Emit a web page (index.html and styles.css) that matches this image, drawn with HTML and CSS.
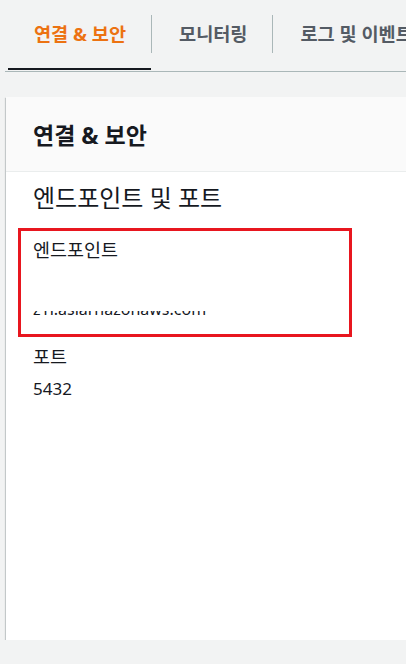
FILE: index.html
```html
<!DOCTYPE html>
<html lang="ko">
<head>
  <meta charset="UTF-8" />
  <meta name="viewport" content="width=device-width, initial-scale=1.0" />
  <title>연결 &amp; 보안</title>
  <link rel="stylesheet" href="styles.css">
</head>
<body>
  <div class="tabs">
    <div class="tab active">연결 &amp; 보안</div>
    <span class="tab-sep"></span>
    <div class="tab">모니터링</div>
    <span class="tab-sep"></span>
    <div class="tab">로그 및 이벤트</div>
  </div>

  <div class="card">
    <div class="card-header">
      <h2>연결 &amp; 보안</h2>
    </div>
    <div class="card-body">
      <h3>엔드포인트 및 포트</h3>
      <div class="field highlight">
        <div class="label">엔드포인트</div>
        <div class="value-mask">
          <div class="value">z1r.asiarnazonaws.com</div>
        </div>
      </div>
      <div class="field">
        <div class="label">포트</div>
        <div class="value port">5432</div>
      </div>
    </div>
  </div>
</body>
</html>
```

FILE: styles.css
```css
html, body {
  overflow: hidden;
}
body {
  margin: 0;
  background: #f2f3f3;
  font-family: "Noto Sans", "Noto Sans CJK KR", sans-serif;
  color: #16191f;
}
.tabs {
  display: flex;
  margin-left: 5px;
  padding-left: 3px;
  border-bottom: 1px solid #aab7b8;
  white-space: nowrap;
}
.tab {
  height: 70px;
  box-sizing: border-box;
  display: flex;
  align-items: center;
  padding: 0 25px 4px 26px;
  border-bottom: 2px solid transparent;
  margin-bottom: 1px;
  font-size: 18.6px;
  font-weight: bold;
  color: #545b64;
}
.tab.active {
  color: #ec7211;
  border-bottom-color: #16191f;
}
.tab + .tab-sep + .tab {
  padding-left: 27px;
}
.tab-sep {
  flex: none;
  width: 1px;
  height: 38px;
  margin-top: 15px;
  background: #aab7b8;
}
.card {
  margin: 25px 0 0 6px;
  width: 520px;
  height: 543px;
  background: #fff;
  box-shadow: 0 1px 1px 0 rgba(0, 28, 36, 0.3), 1px 1px 1px 0 rgba(0, 28, 36, 0.15), -1px 1px 1px 0 rgba(0, 28, 36, 0.15);
}
.card-header {
  height: 74px;
  display: flex;
  align-items: center;
  padding: 0 27px;
  background: #fafafa;
  border-bottom: 1px solid #eaeded;
}
.card-header h2 {
  margin: 0;
  font-size: 23px;
  font-weight: bold;
  color: #16191f;
}
.card-body {
  padding: 12px 0 0 12px;
}
.card-body h3 {
  margin: 0 0 16px 15px;
  font-size: 24px;
  font-weight: normal;
  line-height: 28px;
}
.field {
  width: 304px;
  padding: 0 15px;
}
.field.highlight {
  border: 3px solid #e8161f;
  padding: 7px 12px 18px 12px;
}
.label {
  font-size: 18.5px;
  line-height: 24px;
}
.value {
  font-size: 17px;
  line-height: 24px;
}
.value-mask {
  margin-top: 49px;
  height: 5px;
  overflow: hidden;
}
.value-mask .value {
  margin-top: -14px;
  font-size: 16px;
  color: #16191f;
}
.field + .field {
  margin-top: 8px;
}
.value.port {
  margin-top: 8px;
}
```
